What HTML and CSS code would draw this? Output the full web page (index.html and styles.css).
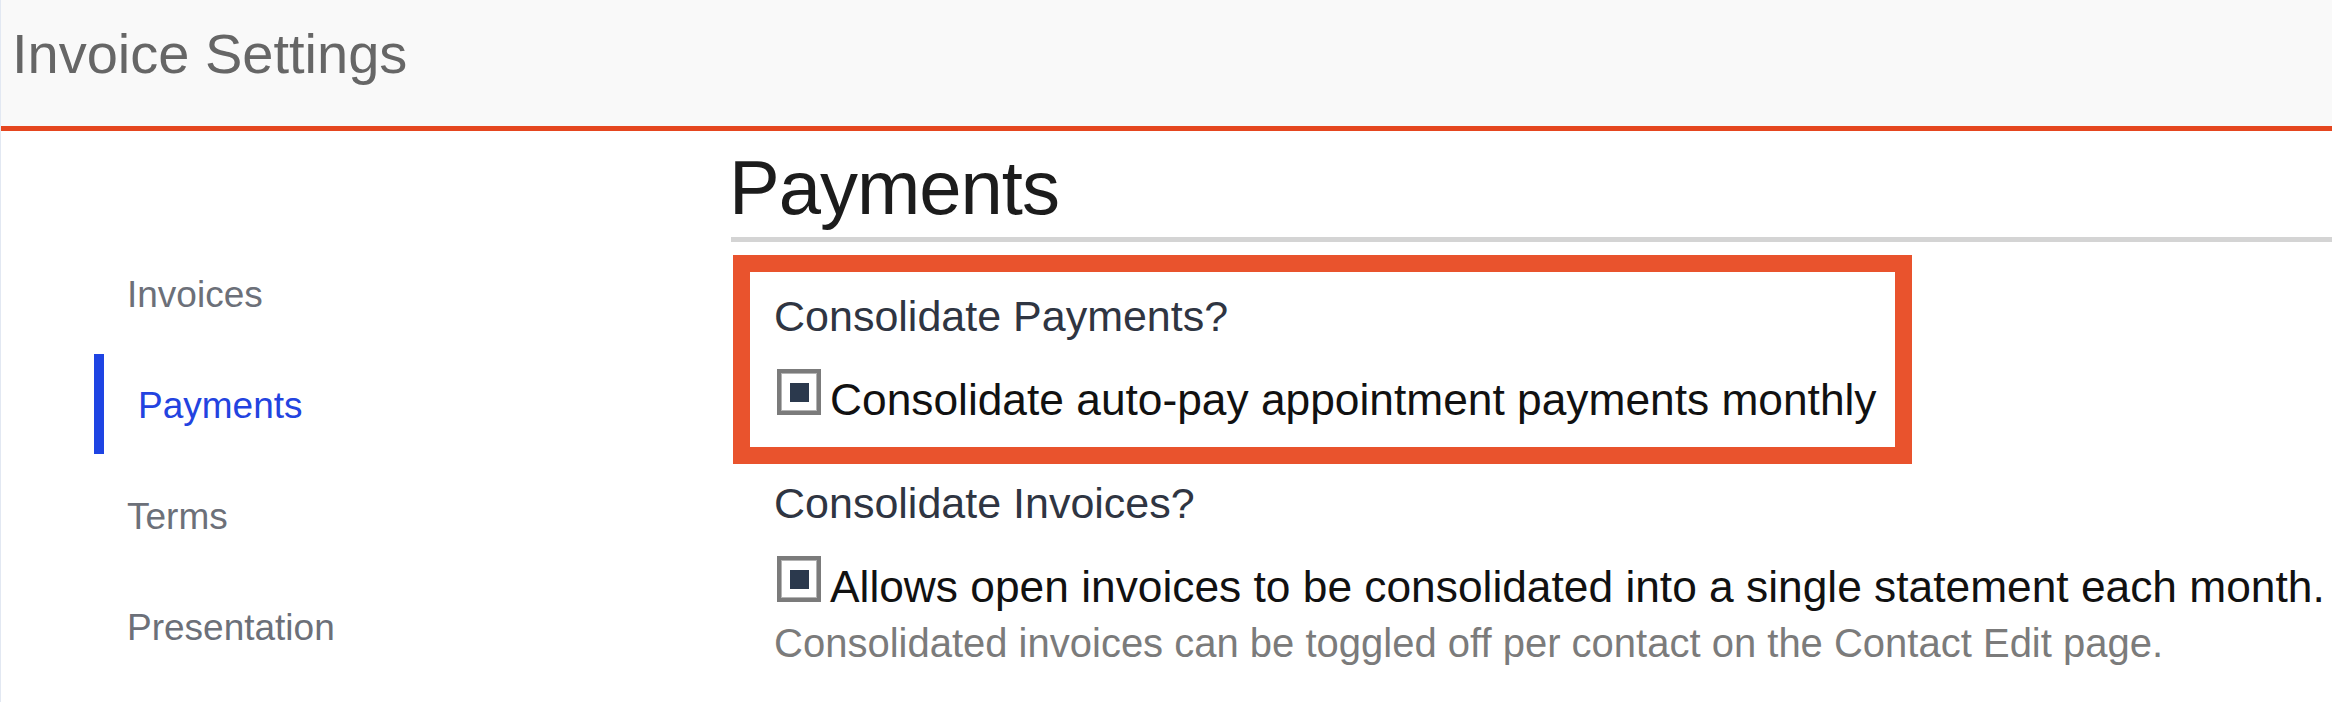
FILE: index.html
```html
<!DOCTYPE html>
<html lang="en">

<head>
    <meta charset="UTF-8">
    <meta name="viewport" content="width=device-width, initial-scale=1.0">
    <title>Invoice Settings</title>
    <link rel="stylesheet" href="styles.css">
</head>

<body>
    <!-- Cabeçalho -->
    <header class="page-header">
        <h1 class="page-title">Invoice Settings</h1>
    </header>

    <div class="layout">
        <!-- Menu lateral -->
        <nav class="side-nav">
            <a class="nav-item" href="#">Invoices</a>
            <a class="nav-item active" href="#">Payments</a>
            <a class="nav-item" href="#">Terms</a>
            <a class="nav-item" href="#">Presentation</a>
        </nav>

        <main class="content">
            <h2 class="section-title">Payments</h2>

            <div class="highlight">
                <div class="field">
                    <div class="field-label">Consolidate Payments?</div>
                    <label class="check-row">
                        <input type="checkbox" class="checkbox" checked>
                        <span class="check-text">Consolidate auto-pay appointment payments monthly</span>
                    </label>
                </div>
            </div>

            <div class="field field-plain">
                <div class="field-label">Consolidate Invoices?</div>
                <label class="check-row">
                    <input type="checkbox" class="checkbox" checked>
                    <span class="check-text">Allows open invoices to be consolidated into a single statement each month.</span>
                </label>
                <p class="field-help">Consolidated invoices can be toggled off per contact on the Contact Edit page.</p>
            </div>
        </main>
    </div>
</body>

</html>
```

FILE: styles.css
```css
body {
    font-family: "Liberation Sans", Arial, sans-serif;
    margin: 0;
    background-color: #fff;
    border-left: 1px solid #e2e8f2;
    min-height: 100vh;
    box-sizing: border-box;
}

.page-header {
    height: 100px;
    padding: 26px 0 0 11px;
    background-color: #f9f9f9;
    border-bottom: 5px solid #e5461f;
}

.page-title {
    margin: 0;
    font-size: 56px;
    font-weight: 400;
    line-height: 56px;
    color: #666;
}

.layout {
    display: flex;
}

.side-nav {
    width: 730px;
    flex: 0 0 730px;
    padding-top: 112px;
}

.nav-item {
    display: block;
    height: 100px;
    box-sizing: border-box;
    margin: 0 0 11px 93px;
    padding: 4px 0 0 33px;
    font-size: 37px;
    line-height: 96px;
    color: #6c7079;
    text-decoration: none;
}

.nav-item.active {
    border-left: 10px solid #1e44e3;
    padding-left: 34px;
    color: #2343e0;
}

.content {
    flex: 1;
    padding-top: 19px;
}

.section-title {
    margin: 0;
    padding-bottom: 11px;
    font-size: 76px;
    font-weight: 400;
    line-height: 76px;
    letter-spacing: -1px;
    text-indent: -2px;
    color: #1c1c1c;
    border-bottom: 5px solid #d4d4d4;
}

/* Caixa de destaque laranja */
.highlight {
    width: 1179px;
    box-sizing: border-box;
    margin: 13px 0 0 2px;
    padding: 19px 24px 22px;
    border: 17px solid #e9532d;
}

.field-plain {
    margin-top: 14px;
    padding-left: 43px;
}

.field-label {
    font-size: 43px;
    line-height: 50px;
    color: #2f3542;
    margin-bottom: 28px;
}

.check-row {
    display: flex;
    align-items: flex-start;
}

.checkbox {
    appearance: none;
    -webkit-appearance: none;
    width: 44px;
    height: 46px;
    box-sizing: border-box;
    margin: 0 0 0 3px;
    border: 4px solid #7b7b7b;
    box-shadow: inset 0 0 0 1px #b4b4b4;
    background: #fff;
    flex: 0 0 auto;
}

.checkbox:checked {
    background: linear-gradient(#2b394d, #2b394d) center / 19px 19px no-repeat, #fff;
}

.check-text {
    margin-left: 9px;
    padding-top: 6px;
    font-size: 44.3px;
    line-height: 50px;
    color: #111;
    white-space: nowrap;
}

.field-help {
    margin: 8px 0 0;
    font-size: 40px;
    line-height: 46px;
    color: #7b7b7b;
}
```
